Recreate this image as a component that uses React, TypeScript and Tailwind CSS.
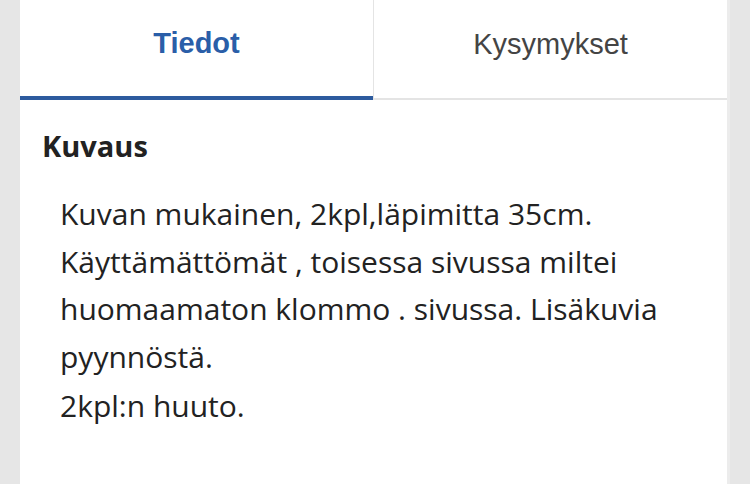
import React from "react";

const tabs = [
    { label: "Tiedot", active: true },
    { label: "Kysymykset", active: false },
];

const App: React.FC = () => (
    <div className="min-h-screen w-[750px] h-[484px] overflow-hidden bg-[#e6e6e6] pl-[20px] pr-[20px]">
        <div className="bg-white h-full border-r-[3px] border-[#ececec]">
            <div className="flex h-[100px]">
                {tabs.map((t) => (
                    <div
                        key={t.label}
                        className={
                            t.active
                                ? "flex-1 flex items-center justify-center pb-[8px] border-b-[4px] border-[#2d5b9e] text-[#2a5ea8] font-bold"
                                : "flex-1 flex items-center justify-center pb-[8px] border-b-[2px] border-l border-[#e4e4e4] text-[#444444]"
                        }
                        style={{ fontFamily: '"Liberation Sans", Arial, sans-serif', fontSize: 29 }}
                    >
                        {t.label}
                    </div>
                ))}
            </div>
            <div className="pt-[26px] pl-[22px] pr-[20px] text-[#222222] font-['Open_Sans',sans-serif]">
                <h2 className="text-[29px] font-bold leading-[40px]">Kuvaus</h2>
                <div className="mt-[24px] pl-[18px] text-[30px] leading-[47.5px]">
                    <p>Kuvan mukainen, 2kpl,läpimitta 35cm.</p>
                    <p>Käyttämättömät , toisessa sivussa miltei</p>
                    <p>huomaamaton klommo . sivussa. Lisäkuvia</p>
                    <p>pyynnöstä.</p>
                    <p className="mt-[2px]">2kpl:n huuto.</p>
                </div>
            </div>
        </div>
    </div>
);

export default App;
